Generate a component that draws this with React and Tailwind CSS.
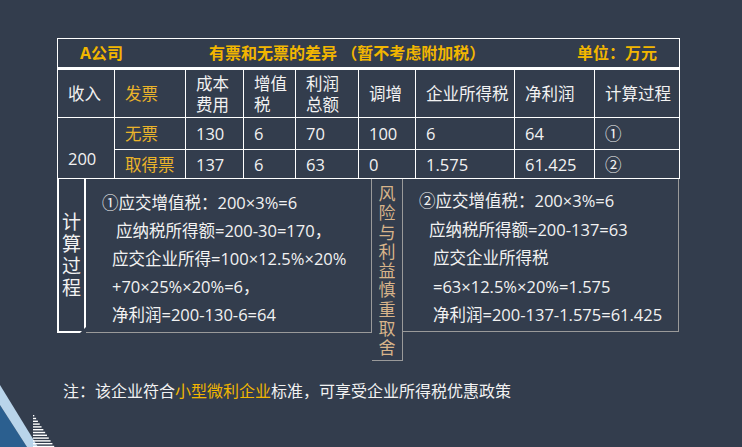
import React from 'react';

const cols = [57, 71, 58, 52, 63, 57, 99, 80, 85];

const Cell = ({ children, yellow, className = '' }) => (
    <td className={`border border-white pl-[10px] p-0 align-middle ${yellow ? 'text-[#ebb42a]' : ''} ${className}`}>
        {children}
    </td>
);

const Corner = () => (
    <svg className="absolute left-0 bottom-0" width="60" height="70" viewBox="0 0 60 70">
        <polygon points="0,28 27,70 0,70" fill="#2b5f8f" />
        <polygon points="0,8 38,70 27,70 0,28" fill="#b9d4ea" />
        {[0, 1, 2, 3, 4, 5, 6, 7, 8, 9, 10, 11].map((i) => {
            const y = 38 + i * 2.8;
            const w = ((y - 36) / 34) * 22;
            return <rect key={i} x="33" y={y} width={w} height="1.4" fill="#ffffff" />;
        })}
    </svg>
);

export default function App() {
    return (
        <div className="relative w-[742px] h-[447px] overflow-hidden bg-[#333d4d] text-[#f2f2f2] font-['Open_Sans','Noto_Sans_CJK_SC',sans-serif]">
            <div className="pl-[57px] pt-[38px]">
                <table className="table-fixed border-collapse w-[622px] text-[16px] leading-[21px]">
                    <colgroup>
                        {cols.map((w, i) => (
                            <col key={i} style={{ width: w }} />
                        ))}
                    </colgroup>
                    <tbody>
                        <tr className="h-[30px]">
                            <td colSpan={9} className="border border-white border-b-[3px] p-0">
                                <div className="flex items-center font-bold text-[#f2b600] leading-[26px]">
                                    <span className="ml-[22px]">A公司</span>
                                    <span className="ml-[86px]">有票和无票的差异 （暂不考虑附加税）</span>
                                    <span className="ml-auto mr-[22px]">单位：万元</span>
                                </div>
                            </td>
                        </tr>
                        <tr className="h-[49px] text-[16.5px]">
                            <Cell>收入</Cell>
                            <Cell yellow>发票</Cell>
                            <Cell>成本<br />费用</Cell>
                            <Cell>增值<br />税</Cell>
                            <Cell>利润<br />总额</Cell>
                            <Cell>调增</Cell>
                            <Cell>企业所得税</Cell>
                            <Cell>净利润</Cell>
                            <Cell>计算过程</Cell>
                        </tr>
                        <tr className="h-[32px] text-[16.5px]">
                            <td rowSpan={2} className="border border-white pl-[10px] pt-[29px] align-top leading-[24px]">200</td>
                            <Cell yellow>无票</Cell>
                            <Cell>130</Cell>
                            <Cell>6</Cell>
                            <Cell>70</Cell>
                            <Cell>100</Cell>
                            <Cell>6</Cell>
                            <Cell>64</Cell>
                            <Cell>①</Cell>
                        </tr>
                        <tr className="h-[29px] text-[16.5px]">
                            <Cell yellow>取得票</Cell>
                            <Cell>137</Cell>
                            <Cell>6</Cell>
                            <Cell>63</Cell>
                            <Cell>0</Cell>
                            <Cell>1.575</Cell>
                            <Cell>61.425</Cell>
                            <Cell>②</Cell>
                        </tr>
                    </tbody>
                </table>

                <div className="flex items-start">
                    <div className="relative w-[29px] h-[154px] border-2 border-t-0 border-white flex flex-col items-center pt-[32px] text-[19px] leading-[22px]">
                        <span>计</span>
                        <span>算</span>
                        <span>过</span>
                        <span>程</span>
                        <span className="absolute -right-[2px] -bottom-[2px] w-0 h-0 border-l-[6px] border-l-transparent border-b-[6px] border-b-[#333d4d]" />
                    </div>
                    <div className="w-[286px] h-[154px] border border-t-0 border-l-0 border-[#9a9a9a] pl-[16px] pt-[10px] text-[16.5px] leading-[28px] whitespace-nowrap">
                        <div>①应交增值税：200×3%=6</div>
                        <div className="ml-[14px]">应纳税所得额=200-30=170，</div>
                        <div className="ml-[10px]">应交企业所得=100×12.5%×20%</div>
                        <div className="ml-[10px]">+70×25%×20%=6，</div>
                        <div className="ml-[10px]">净利润=200-130-6=64</div>
                    </div>
                    <div className="w-[31px] h-[182px] border border-t-0 border-l-0 border-[#9a9a9a] flex flex-col items-center pt-[5px] text-[17px] leading-[19.25px] text-[#d8b48a]">
                        {'风险与利益慎重取舍'.split('').map((c, i) => (
                            <span key={i}>{c}</span>
                        ))}
                    </div>
                    <div className="w-[276px] h-[153px] border border-t-0 border-l-0 border-[#9a9a9a] pl-[16px] pt-[8px] text-[16.5px] leading-[28.5px] whitespace-nowrap">
                        <div>②应交增值税：200×3%=6</div>
                        <div className="ml-[10px]">应纳税所得额=200-137=63</div>
                        <div className="ml-[14px]">应交企业所得税</div>
                        <div className="ml-[14px]">=63×12.5%×20%=1.575</div>
                        <div className="ml-[14px]">净利润=200-137-1.575=61.425</div>
                    </div>
                </div>
            </div>

            <p className="pl-[63px] mt-[18px] text-[16px] leading-[24px]">
                注：该企业符合<span className="text-[#f2b600]">小型微利企业</span>标准，可享受企业所得税优惠政策
            </p>

            <Corner />
        </div>
    );
}
